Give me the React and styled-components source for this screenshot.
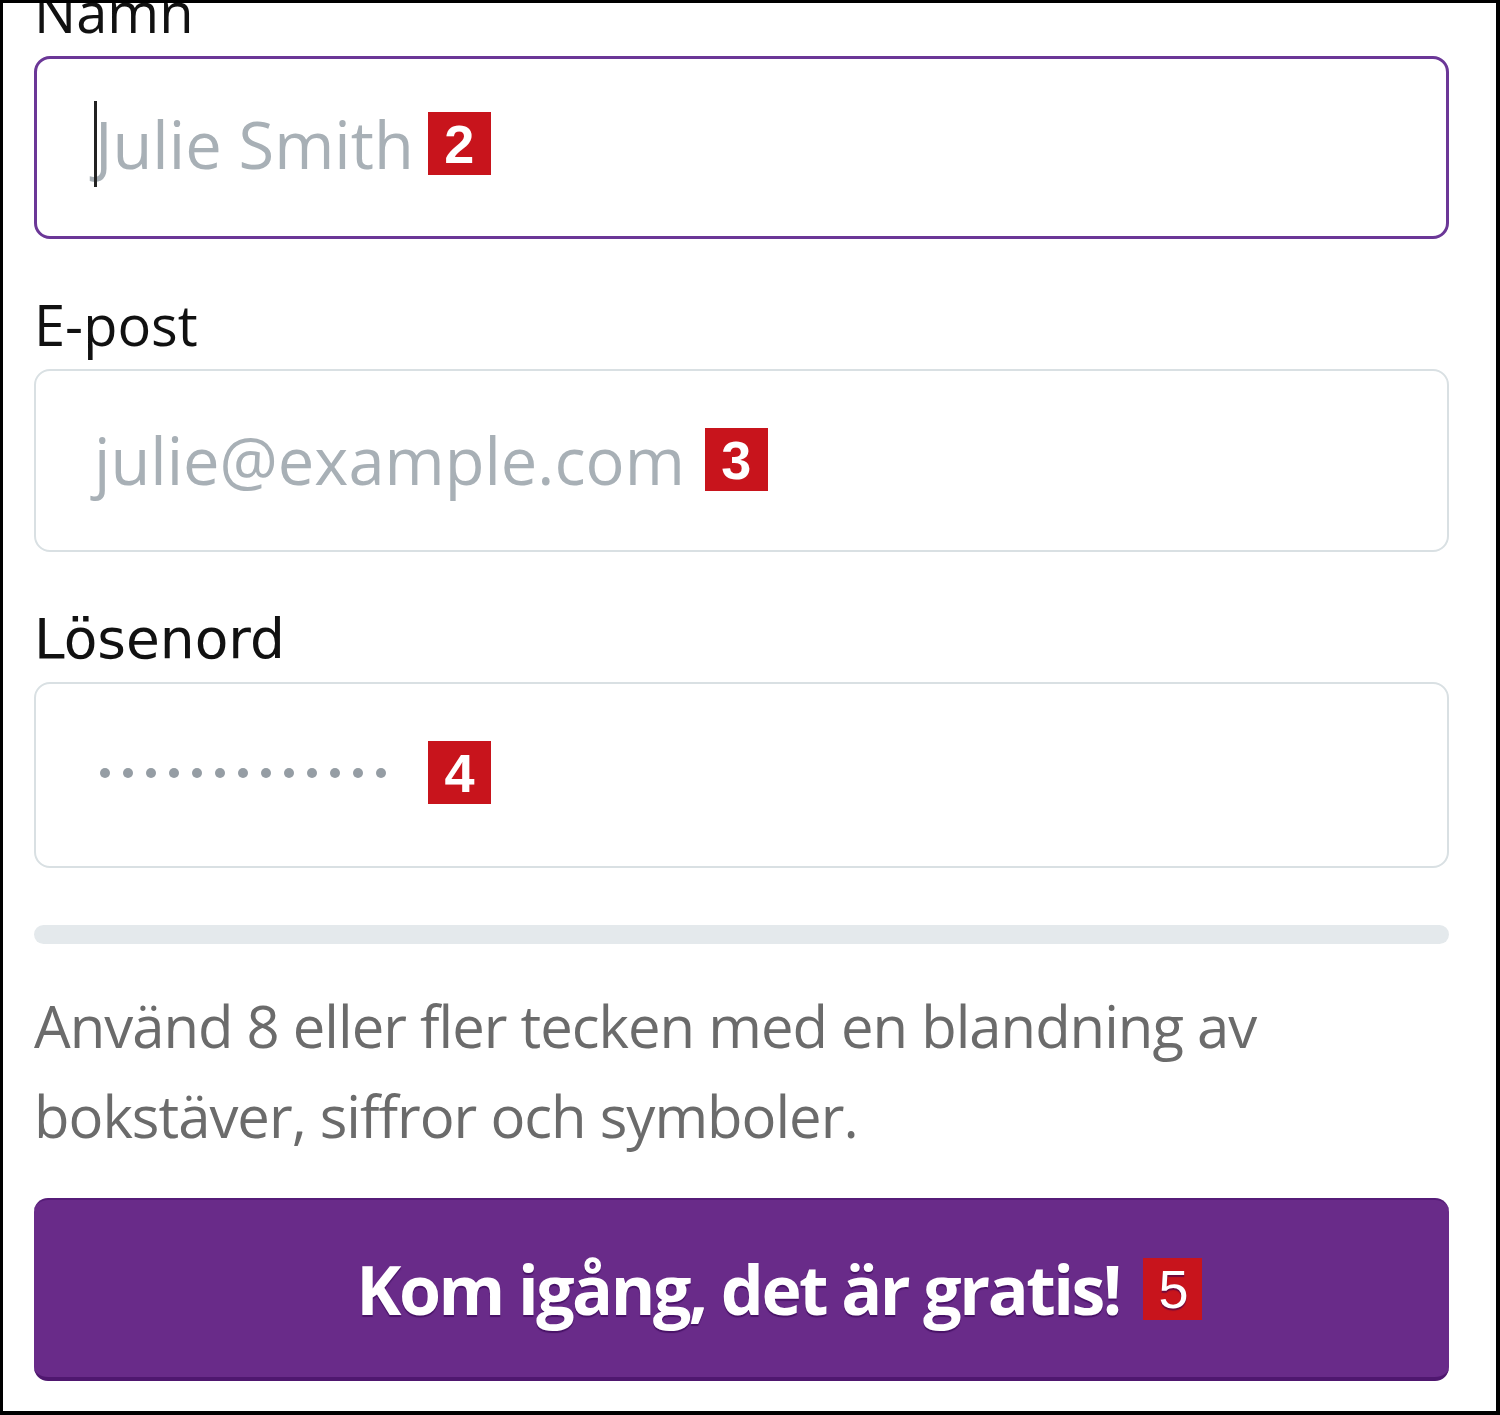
import React from "react";
import styled, { createGlobalStyle } from "styled-components";

const Global = createGlobalStyle`
  html, body { margin: 0; padding: 0; background: #ffffff; }
  * { box-sizing: border-box; }
`;

const Frame = styled.div`
  width: 1500px;
  height: 1415px;
  border-style: solid;
  border-color: #000;
  border-width: 3px 4px 4px 3px;
  background: #fff;
  overflow: hidden;
  padding: 0 47px 0 31px;
  font-family: "Open Sans", "Noto Sans", sans-serif;
`;

const Form = styled.form`
  display: flex;
  flex-direction: column;
  margin-top: -24px;
`;

const Field = styled.div`
  display: flex;
  flex-direction: column;
  margin-bottom: ${(p) => p.$gap || 0}px;
`;

const Label = styled.label`
  display: block;
  font-family: ${(p) =>
    p.$alt ? '"DejaVu Sans", Verdana, sans-serif' : '"Open Sans", sans-serif'};
  font-size: ${(p) => (p.$alt ? 55 : 56)}px;
  line-height: ${(p) => (p.$alt ? 59 : 64)}px;
  padding-top: ${(p) => (p.$alt ? 5 : 0)}px;
  color: #111;
  margin-bottom: 13px;
`;

const InputBox = styled.div`
  height: ${(p) => p.$h || 183}px;
  border: ${(p) => (p.$focus ? "3px solid #6b3797" : "2px solid #d9e0e3")};
  border-radius: 16px;
  background: #fff;
  display: flex;
  align-items: center;
  padding-left: ${(p) => (p.$focus ? 57 : 58)}px;
  padding-bottom: ${(p) => p.$pb || 0}px;
`;

const Caret = styled.span`
  display: inline-block;
  width: 3px;
  height: 86px;
  background: #222;
  margin-right: -2px;
  position: relative;
  z-index: 1;
`;

const Placeholder = styled.span`
  font-size: 65px;
  color: #a8b0b6;
  white-space: nowrap;
`;

const Badge = styled.span`
  display: inline-flex;
  align-items: center;
  justify-content: center;
  width: ${(p) => p.$w || 63}px;
  height: ${(p) => p.$hh || 63}px;
  margin-left: ${(p) => p.$ml || 18}px;
  background: #c8141c;
  color: #fff;
  font-family: "Liberation Sans", Arial, sans-serif;
  font-weight: ${(p) => (p.$light ? 400 : 700)};
  font-size: 54px;
  line-height: 1;
  flex-shrink: 0;
`;

const Dots = styled.div`
  display: flex;
  gap: 13px;
  margin-left: 6px;
`;

const Dot = styled.span`
  width: 10px;
  height: 10px;
  border-radius: 50%;
  background: #959da4;
`;

const Strength = styled.div`
  height: 19px;
  border-radius: 10px;
  background: #e4e9ec;
  margin-top: 57px;
`;

const Help = styled.p`
  margin: 37px 0 0;
  font-size: 58px;
  line-height: 90px;
  letter-spacing: -1px;
  color: #6b6b6b;
  width: 1300px;
`;

const Submit = styled.button`
  margin-top: 37px;
  height: 183px;
  width: 100%;
  border: none;
  border-top: 2px solid #561c78;
  border-bottom: 4px solid #4f176f;
  border-radius: 14px;
  background: #692b89;
  color: #fff;
  display: flex;
  align-items: center;
  justify-content: center;
  font-family: "Open Sans", sans-serif;
  font-weight: 700;
  font-size: 68px;
  letter-spacing: -2.5px;
  text-shadow: 0 2px 1px rgba(50, 0, 80, 0.6);
  padding: 0 0 0 75px;
  cursor: pointer;
`;

export default function App() {
  return (
    <>
      <Global />
      <Frame>
        <Form onSubmit={(e) => e.preventDefault()}>
          <Field $gap={53}>
            <Label>Namn</Label>
            <InputBox $focus $pb={8}>
              <Caret />
              <Placeholder>Julie Smith</Placeholder>
              <Badge $ml={14}>2</Badge>
            </InputBox>
          </Field>
          <Field $gap={53}>
            <Label>E-post</Label>
            <InputBox $pb={2}>
              <Placeholder>julie@example.com</Placeholder>
              <Badge $ml={20}>3</Badge>
            </InputBox>
          </Field>
          <Field>
            <Label $alt>Lösenord</Label>
            <InputBox $h={186} $pb={5}>
              <Dots>
                {Array.from({ length: 13 }).map((_, i) => (
                  <Dot key={i} />
                ))}
              </Dots>
              <Badge $ml={42}>4</Badge>
            </InputBox>
          </Field>
          <Strength />
          <Help>
            Använd 8 eller fler tecken med en blandning av bokstäver, siffror och
            symboler.
          </Help>
          <Submit type="submit">
            Kom igång, det är gratis!
            <Badge $ml={23} $w={59} $hh={62} $light>
              5
            </Badge>
          </Submit>
        </Form>
      </Frame>
    </>
  );
}
